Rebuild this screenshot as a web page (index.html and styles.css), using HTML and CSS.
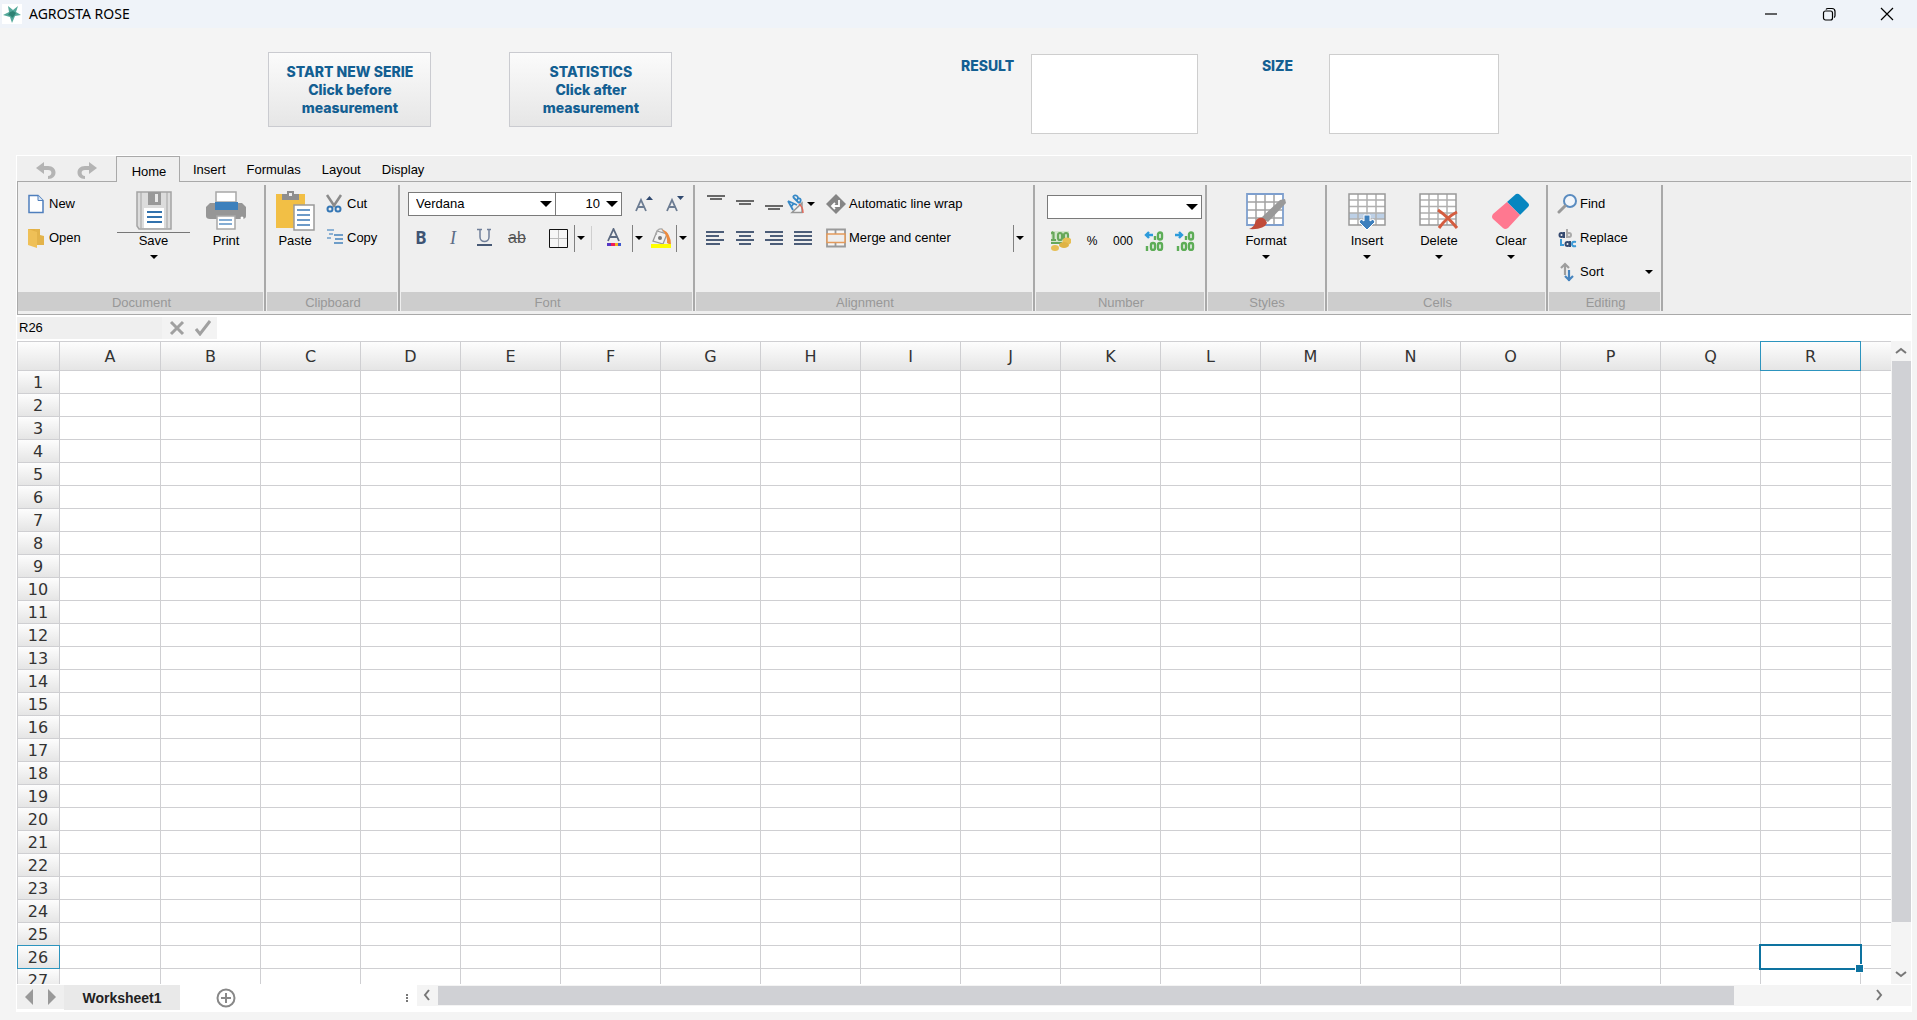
FILE: index.html
```html
<!DOCTYPE html>
<html lang="en">
<head>
<meta charset="utf-8">
<title>AGROSTA ROSE</title>
<link rel="stylesheet" href="styles.css">
</head>
<body>
<svg class="defs" width="0" height="0" aria-hidden="true">
  <symbol id="caret" viewBox="0 0 10 10"><path d="M1 3h8L5 7z"/></symbol>
  <symbol id="drop" viewBox="0 0 12 12"><path d="M0 3h12L6 9z"/></symbol>
</svg>

<header class="titlebar">
  <svg class="logo" viewBox="0 0 20 20"><path fill="#fff" d="M0 0h20v20H0z"/><path fill="#55a99b" d="M6 2l5 4 5-4-2 6 5 3-6 1-3 7-2-6-7-2 6-3z"/><path fill="#2d8273" d="M8 8l3-1 3 2-2 3-2 2-1-2-3-1z"/></svg>
  <h1>AGROSTA ROSE</h1>
  <div class="window-buttons">
    <button aria-label="Minimize"><svg viewBox="0 0 14 14"><path d="M1 7h12"/></svg></button>
    <button aria-label="Restore"><svg viewBox="0 0 14 14"><rect x="1.500" y="4" width="9" height="9" rx="2"/><path d="M4 2.500Q4.500 1.500 6 1.500h4q3 0 3 3v4q0 1.500-1 2"/></svg></button>
    <button aria-label="Close"><svg viewBox="0 0 14 14"><path d="M1 1l12 12M13 1L1 13"/></svg></button>
  </div>
</header>

<section class="measure">
  <button class="action">START NEW SERIE<br>Click before<br>measurement</button>
  <button class="action">STATISTICS<br>Click after<br>measurement</button>
  <div class="readout result"><label for="result">RESULT</label><input id="result" type="text"></div>
  <div class="readout size"><label for="size">SIZE</label><input id="size" type="text"></div>
</section>

<main class="workbook">
  <nav class="tabs">
    <div class="history">
      <button aria-label="Undo"><svg class="ic" viewBox="0 0 20 20"><path d="M8 2L0 8l8 6v-4h4c5 0 4 6 0 6v3c10 0 10-13 0-13H8z" fill="#b4b4b4"/></svg></button>
      <button aria-label="Redo"><svg class="ic" viewBox="0 0 20 20"><path d="M12 2l8 6-8 6v-4H8c-5 0-4 6 0 6v3C-2 19-2 6 8 6h4z" fill="#b4b4b4"/></svg></button>
    </div>
    <button class="tab active">Home</button>
    <button class="tab">Insert</button>
    <button class="tab">Formulas</button>
    <button class="tab">Layout</button>
    <button class="tab">Display</button>
  </nav>

  <div class="ribbon">
    <section class="group g-document">
      <div class="tools">
        <div class="stack">
          <div class="row"><button class="tool"><svg class="ic" viewBox="0 0 20 20"><path d="M3 1.500h9l5 5v12H3z" fill="#fff" stroke="#4f7fbd" stroke-width="1.500"/><path d="M12 1.500v5h5" fill="#dbe7f5" stroke="#4f7fbd"/></svg>New</button></div>
          <div class="row"><button class="tool"><svg class="ic" viewBox="0 0 20 20"><path d="M2 1h7v16H2z" fill="#e3b044"/><path d="M9 1h5v6l4 1v9H9z" fill="#e3b34a"/><path d="M2 1l9 3v16l-9-3z" fill="#efc057"/></svg>Open</button></div>
        </div>
        <button class="big save"><svg class="pic" viewBox="0 0 40 40"><path d="M3 2h34v37H5l-2-3z" fill="#dcdcdc" stroke="#a4a4a4" stroke-width="1.500"/><path d="M7 2v36M33 2v36" stroke="#a4a4a4"/><path d="M14 2h13v13H14z" fill="#999"/><path d="M21 4h3v8h-3z" fill="#e9e9e9"/><path d="M10 18h20v20H10z" fill="#fff"/><path d="M13 22h15M13 27h15M13 32h15" stroke="#3272ad" stroke-width="2"/></svg><span>Save</span><svg class="caret"><use href="#caret"/></svg></button>
        <button class="big"><svg class="pic" viewBox="0 0 40 40"><path d="M4 13h32l4 4v9q0 3-4 3H4q-4 0-4-3v-9z" fill="#969696"/><path d="M10 2h20v10H10z" fill="#fff" stroke="#a8a8a8" stroke-width="1.500"/><path d="M9 12h23v8H9z" fill="#3d80bc"/><path d="M11 26h18v13H11z" fill="#fff" stroke="#a8a8a8" stroke-width="1.500"/><path d="M13 30h13M13 34h13" stroke="#5c92c6" stroke-width="1.500"/><circle cx="36" cy="28" r="1.500" fill="#fff"/></svg><span>Print</span></button>
      </div>
      <h2>Document</h2>
    </section>

    <section class="group g-clipboard">
      <div class="tools">
        <button class="big"><svg class="pic" viewBox="0 0 40 40"><path d="M1 4h29v34H1z" fill="#f2bf45"/><path d="M7 4h5V1h7v3h5v6H7z" fill="#8e8e8e"/><path d="M14 3h3v3h-3z" fill="#eee"/><path d="M19 15h20v25H19z" fill="#fff" stroke="#9b9b9b" stroke-width="1.500"/><path d="M22 20h13M22 25h13M22 30h13M22 35h13" stroke="#3c7ab7" stroke-width="1.500"/></svg><span>Paste</span></button>
        <div class="stack">
          <div class="row"><button class="tool"><svg class="ic" viewBox="0 0 20 20"><path d="M3 1l8 12M17 1L9 13" stroke="#8b8b8b" stroke-width="2.500"/><circle cx="6" cy="15" r="2.500" fill="none" stroke="#3577b5" stroke-width="2"/><circle cx="14" cy="15" r="2.500" fill="none" stroke="#3577b5" stroke-width="2"/></svg>Cut</button></div>
          <div class="row"><button class="tool"><svg class="ic" viewBox="0 0 20 20"><path d="M3 2h7M5 6h4M3 10h4" stroke="#6d9ecb" stroke-width="1.500"/><path d="M10 7h9M11 11h8M10 15h9" stroke="#4482bc" stroke-width="1.500"/></svg>Copy</button></div>
        </div>
      </div>
      <h2>Clipboard</h2>
    </section>

    <section class="group g-font">
      <div class="tools">
        <div class="stack">
          <div class="row">
            <div class="combo face"><select aria-label="Font"><option>Verdana</option></select><svg><use href="#drop"/></svg></div>
            <div class="combo points"><select aria-label="Font size"><option>10</option></select><svg><use href="#drop"/></svg></div>
            <div class="set scale">
              <button aria-label="Grow font"><svg class="ic" viewBox="0 0 20 20"><path d="M1 17L6 6l5 11M3 13h6" fill="none" stroke="#6c7c92" stroke-width="1.800"/><path d="M11 6h7l-3.500-4z" fill="#314a70"/></svg></button>
              <button aria-label="Shrink font"><svg class="ic" viewBox="0 0 20 20"><path d="M2 17L7 6l5 11M4 13h6" fill="none" stroke="#6c7c92" stroke-width="1.800"/><path d="M12 2h7l-3.500 4z" fill="#314a70"/></svg></button>
            </div>
          </div>
          <div class="row">
            <div class="set faces">
              <button class="glyph b">B</button>
              <button class="glyph i">I</button>
              <button aria-label="Underline"><svg class="ic" viewBox="0 0 20 20"><path d="M5 1v8c0 6 9 6 9 0V1M2 1.500h5M12 1.500h4" fill="none" stroke="#71809a" stroke-width="1.500"/><path d="M2 17h15" stroke="#475975" stroke-width="2"/></svg></button>
              <button class="glyph s">ab</button>
            </div>
            <div class="split borders"><button aria-label="Borders"><svg class="ic" viewBox="0 0 20 20"><path fill="#f6f6f6" stroke="#111" d="M.5 1.500h18v18H.5z"/><path d="M9.500 2v17M1 10.500h17" stroke="#bbb"/></svg></button><button class="more" aria-label="More borders"><svg class="caret"><use href="#caret"/></svg></button></div>
            <i class="rule"></i>
            <div class="split color"><button aria-label="Font color"><svg class="ic" viewBox="0 0 20 20"><path d="M4 13L9.500 1 15 13M6 9h7" fill="none" stroke="#5b6980" stroke-width="1.800"/><path d="M3 15h4v3H3z" fill="#5636c4"/><path d="M7 15h4v3H7z" fill="#ed1e5a"/><path d="M11 15h3v3h-3z" fill="#f7b31b"/><path d="M14 15h3v3h-3z" fill="#4059cf"/></svg></button><button class="more" aria-label="More font colors"><svg class="caret"><use href="#caret"/></svg></button></div>
            <div class="split fill"><button aria-label="Fill color"><svg class="ic" viewBox="0 0 20 20"><path d="M6 3l10 3-4 10-10-3z" fill="#f2f2f2" stroke="#999" stroke-width="1.300"/><path d="M5 7q1-7 6-6l2 4" fill="none" stroke="#aaa" stroke-width="1.400"/><circle cx="9" cy="10" r="2" fill="#777"/><path d="M11 1q9 4 9 16l-4-2q1-6-5-14z" fill="#ed8a3d"/><path d="M0 16h20v4H0z" fill="#ff0"/></svg></button><button class="more" aria-label="More fill colors"><svg class="caret"><use href="#caret"/></svg></button></div>
          </div>
        </div>
      </div>
      <h2>Font</h2>
    </section>

    <section class="group g-alignment">
      <div class="tools">
        <div class="stack">
          <div class="row">
            <div class="set lines">
              <button aria-label="Align top"><svg class="ic" viewBox="0 0 20 20"><path d="M1 2h18M4 5h12" stroke="#686868" stroke-width="2"/></svg></button>
              <button aria-label="Align middle"><svg class="ic" viewBox="0 0 20 20"><path d="M1 7h18M4 10h12" stroke="#686868" stroke-width="2"/></svg></button>
              <button aria-label="Align bottom"><svg class="ic" viewBox="0 0 20 20"><path d="M1 12h18M4 15h12" stroke="#686868" stroke-width="2"/></svg></button>
            </div>
            <button class="rotate" aria-label="Text rotation"><svg class="ic" viewBox="0 0 20 20"><g fill="none" stroke="#3789c7" stroke-width="1.800"><path d="M2 7l9 4M2 7l5 9M8 9l-3 4"/><path d="M7 3l6 6M11 6c2-4 6 0 2 3M7 3c2-4 7 0 4 3"/></g><path d="M6 18.500L16 9v9.500z" fill="#f4f4f4" stroke="#969696" stroke-width="1.500"/><path d="M13 10q4 3 4 9" fill="none" stroke="#e0695a" stroke-width="1.500"/></svg><svg class="caret"><use href="#caret"/></svg></button>
            <button class="tool"><svg class="ic" viewBox="0 0 20 20"><path d="M10 0l10 10-10 10L0 10z" fill="#858585"/><path d="M13 6v6H7M9 9l-3 3 3 3" fill="none" stroke="#fff" stroke-width="1.800"/></svg>Automatic line wrap</button>
          </div>
          <div class="row">
            <div class="set lines">
              <button aria-label="Align left"><svg class="ic" viewBox="0 0 20 20"><path d="M0 4h18M0 8h13M0 12h18M0 16h14" stroke="#4c5d78" stroke-width="1.800"/></svg></button>
              <button aria-label="Center"><svg class="ic" viewBox="0 0 20 20"><path d="M1 4h18M4 8h12M1 12h18M4 16h12" stroke="#4c5d78" stroke-width="1.800"/></svg></button>
              <button aria-label="Align right"><svg class="ic" viewBox="0 0 20 20"><path d="M1 4h18M6 8h13M1 12h18M6 16h13" stroke="#4c5d78" stroke-width="1.800"/></svg></button>
              <button aria-label="Justify"><svg class="ic" viewBox="0 0 20 20"><path d="M1 4h18M1 8h18M1 12h18M1 16h18" stroke="#4c5d78" stroke-width="1.800"/></svg></button>
            </div>
            <button class="tool merge"><svg class="ic" viewBox="0 0 20 20"><path d="M1 1.500h18v17H1z" fill="#f6f6f6" stroke="#9a9a9a" stroke-width="1.800"/><path d="M9.500 1v5M9.500 15v4" stroke="#9a9a9a" stroke-width="1.800"/><path d="M1 6h18v8.500H1z" fill="#eee" stroke="#e39a5b" stroke-width="1.500"/></svg>Merge and center</button>
            <button class="more" aria-label="More merge options"><svg class="caret"><use href="#caret"/></svg></button>
          </div>
        </div>
      </div>
      <h2>Alignment</h2>
    </section>

    <section class="group g-number">
      <div class="tools">
        <div class="stack">
          <div class="row"><div class="combo format"><select aria-label="Number format"><option></option></select><svg><use href="#drop"/></svg></div></div>
          <div class="row formats">
            <button aria-label="Currency"><svg class="ic" viewBox="0 0 20 20"><path d="M0 0h18v13H0z" fill="#d3e6cd"/><path d="M2.500 1v8M0 2.500l2.500-1.500M0 9h5" stroke="#67a85a" stroke-width="2.200" fill="none"/><rect x="7" y="2" width="4" height="7" rx="2" fill="none" stroke="#67a85a" stroke-width="2.200"/><rect x="13" y="2" width="4" height="7" rx="2" fill="none" stroke="#67a85a" stroke-width="2.200"/><path d="M0 12h11" stroke="#67a85a" stroke-width="2"/><ellipse cx="16" cy="10" rx="4.500" ry="3.500" fill="#e7bf54"/><ellipse cx="13" cy="14" rx="5" ry="3" fill="#dfb345"/><ellipse cx="4" cy="17" rx="4" ry="3" fill="#e7bf54"/></svg></button>
            <button class="glyph n">%</button>
            <button class="glyph n">000</button>
            <button aria-label="Increase decimals"><svg class="ic" viewBox="0 0 20 20"><path d="M9 4H2M5 1L2 4l3 3" stroke="#2d9bdb" stroke-width="2.400" fill="none"/><g fill="none" stroke="#5dad57" stroke-width="2.400"><rect x="14" y="1.500" width="4" height="7" rx="2"/><rect x="7" y="12" width="4" height="7" rx="2"/><rect x="14" y="12" width="4" height="7" rx="2"/><path d="M11 5v4M3 15v5"/></g></svg></button>
            <button aria-label="Decrease decimals"><svg class="ic" viewBox="0 0 20 20"><path d="M0 4h7M4 1l3 3-3 3" stroke="#2d9bdb" stroke-width="2.400" fill="none"/><g fill="none" stroke="#5dad57" stroke-width="2.400"><rect x="14" y="1.500" width="4" height="7" rx="2"/><rect x="7" y="12" width="4" height="7" rx="2"/><rect x="14" y="12" width="4" height="7" rx="2"/><path d="M11 5v4M3 15v5"/></g></svg></button>
          </div>
        </div>
      </div>
      <h2>Number</h2>
    </section>

    <section class="group g-styles">
      <div class="tools">
        <button class="big"><svg class="pic" viewBox="0 0 40 40"><path d="M1 4h36v31H1z" fill="#fff"/><path d="M10 4v31M19 4v31M28 4v31M1 12h36M1 20h36M1 28h36" stroke="#a3a3a3" stroke-width="1.500"/><path d="M1 4h36v31H1z" fill="none" stroke="#7e9fce" stroke-width="1.800"/><path d="M39 9l1 4-18 19-7-4 19-18z" fill="#999"/><path d="M13 28q6-1 8 5-3 7-18 6 5-2 6-6 1-4 4-5z" fill="#c04b3a"/></svg><span>Format</span><svg class="caret"><use href="#caret"/></svg></button>
      </div>
      <h2>Styles</h2>
    </section>

    <section class="group g-cells">
      <div class="tools">
        <button class="big"><svg class="pic" viewBox="0 0 40 40"><path d="M2 4h36v31H2z" fill="#fff"/><path d="M2 23h36v6H2z" fill="#bdd0e6"/><path d="M2 10h36M2 16.500h36M2 23h36M2 29h36M11 4v31M20 4v31M29 4v31" stroke="#b0b0b0" stroke-width="1.500"/><path d="M2 4h36v31H2z" fill="none" stroke="#999" stroke-width="1.500"/><path d="M17 25h6v6l3-2 2 3-8 8-8-8 2-3 3 2z" fill="#3c7fbd" stroke="#fff"/></svg><span>Insert</span><svg class="caret"><use href="#caret"/></svg></button>
        <button class="big"><svg class="pic" viewBox="0 0 40 40"><path d="M1 4h36v31H1z" fill="#fff"/><path d="M1 10h36M1 16.500h36M1 23h36M1 29h36M10 4v31M19 4v31M28 4v31" stroke="#b0b0b0" stroke-width="1.500"/><path d="M1 4h36v31H1z" fill="none" stroke="#999" stroke-width="1.500"/><path d="M19 20q9 6 19 18M38 22q-10 5-18 16" fill="none" stroke="#d45c3f" stroke-width="3"/></svg><span>Delete</span><svg class="caret"><use href="#caret"/></svg></button>
        <button class="big"><svg class="pic" viewBox="0 0 40 40"><path d="M16 12L25 4q2-1 4 1l8 8q2 2 0 4l-8 8z" fill="#0786c0"/><path d="M16 12l13 13-12 13q-3 2-5 0L2 29q-2-2 0-5z" fill="#ff7890"/></svg><span>Clear</span><svg class="caret"><use href="#caret"/></svg></button>
      </div>
      <h2>Cells</h2>
    </section>

    <section class="group g-editing">
      <div class="tools">
        <div class="stack">
          <div class="row"><button class="tool"><svg class="ic" viewBox="0 0 20 20"><circle cx="13" cy="7" r="6" fill="#f2f6fb" stroke="#5a8cc0" stroke-width="2"/><path d="M8 12l-6 6" stroke="#999" stroke-width="3" stroke-linecap="round"/></svg>Find</button></div>
          <div class="row"><button class="tool"><svg class="ic" viewBox="0 0 20 20"><g fill="none" stroke-width="2"><circle cx="4.500" cy="7" r="2" stroke="#34496f"/><path d="M7 4v6" stroke="#34496f"/><path d="M10 1v9" stroke="#aaa"/><circle cx="12" cy="7" r="2" stroke="#aaa"/><path d="M4 11v6h3" stroke="#3d9ad6"/><circle cx="10.500" cy="16" r="2" stroke="#34496f"/><path d="M13 13v6" stroke="#34496f"/><path d="M19 14q-4-1-4 2t4 2" stroke="#3d9ad6"/></g></svg>Replace</button></div>
          <div class="row"><button class="tool"><svg class="ic" viewBox="0 0 20 20"><path d="M8 13V2M4 6l4-4 4 4" fill="none" stroke="#9d9d9d" stroke-width="2.200"/><path d="M12 8v11M8 14l4 4 4-4" fill="none" stroke="#4684bf" stroke-width="2.200"/></svg>Sort</button><button class="sort-more" aria-label="More sort options"><svg class="caret"><use href="#caret"/></svg></button></div>
        </div>
      </div>
      <h2>Editing</h2>
    </section>
  </div>

  <div class="formula">
    <input class="cell-name" type="text" value="R26" aria-label="Cell name">
    <div class="confirm">
      <button aria-label="Cancel"><svg viewBox="0 0 16 16"><path d="M2 2l12 12M14 2L2 14"/></svg></button>
      <button aria-label="Accept"><svg viewBox="0 0 16 16"><path d="M1 9l4 5L15 1"/></svg></button>
    </div>
    <input class="formula-text" type="text" aria-label="Formula">
  </div>

  <div class="sheet">
    <div class="viewport">
      <table id="grid"><thead></thead><tbody></tbody></table>
    </div>
    <div class="vscroll">
      <button aria-label="Scroll up"><svg viewBox="0 0 12 12"><path d="M1 8l5-4 5 4"/></svg></button>
      <div class="track"><div class="thumb"></div></div>
      <button aria-label="Scroll down"><svg viewBox="0 0 12 12"><path d="M1 4l5 4 5-4"/></svg></button>
    </div>
  </div>

  <footer class="sheetbar">
    <div class="sheet-nav">
      <button aria-label="Previous sheet"><svg viewBox="0 0 10 16"><path d="M9 0v16L1 8z"/></svg></button>
      <button aria-label="Next sheet"><svg viewBox="0 0 10 16"><path d="M1 0v16l8-8z"/></svg></button>
    </div>
    <button class="sheet-tab">Worksheet1</button>
    <button class="add" aria-label="Add sheet"><svg class="ic" viewBox="0 0 20 20"><circle cx="10" cy="10" r="8.500"/><path d="M10 5v10M5 10h10"/></svg></button>
    <svg class="grip" viewBox="0 0 2 8"><path d="M0 0h2v2H0zM0 3h2v2H0zM0 6h2v2H0z"/></svg>
    <div class="hscroll">
      <button aria-label="Scroll left"><svg viewBox="0 0 12 12"><path d="M8 1L4 6l4 5"/></svg></button>
      <div class="track"><div class="thumb"></div></div>
      <button aria-label="Scroll right"><svg viewBox="0 0 12 12"><path d="M4 1l4 5-4 5"/></svg></button>
    </div>
  </footer>
</main>
<script src="grid.js"></script>
</body>
</html>
```
FILE: styles.css
```css
* { box-sizing: border-box; }

body {
  margin: 0;
  height: 100vh;
  display: flex;
  flex-direction: column;
  overflow: hidden;
  background: #f4f4f4;
  color: #000;
  font: 13px/16px "Liberation Sans", Arial, sans-serif;
}

button {
  margin: 0;
  padding: 0;
  border: 0;
  background: none;
  color: inherit;
  font: inherit;
}

input, select { font: inherit; color: inherit; border-radius: 0; }
svg { display: block; flex: none; }
.defs { position: absolute; }
.ic { width: 20px; height: 20px; }
.pic { width: 40px; height: 40px; overflow: visible; }
.caret { width: 10px; height: 10px; }

/* Title bar */
.titlebar {
  flex: none;
  display: flex;
  align-items: center;
  height: 28px;
  padding: 0 1px 0 2px;
  background: #eff3f9;
}
.logo { width: 20px; height: 20px; }
.titlebar h1 {
  margin: 0 auto 0 7px;
  font: 400 14px/20px "Noto Sans", "Open Sans", sans-serif;
}
.window-buttons { display: flex; }
.window-buttons button { width: 58px; height: 28px; display: grid; place-items: center; }
.window-buttons svg { width: 14px; height: 14px; fill: none; stroke: #000; stroke-width: 1.2; }

/* Measurement controls */
.measure {
  flex: none;
  display: flex;
  align-items: flex-start;
  height: 127px;
  padding: 24px 0 0 14%;
  color: #135f92;
  font: 800 14px/18px Inter, Arial, sans-serif;
}
.action {
  width: 163px;
  height: 75px;
  border: 1px solid #cacbd0;
  background: linear-gradient(#fbfbfb, #e6e6e6);
}
.action + .action { margin-left: 78px; }
.readout { display: flex; padding-top: 2px; }
.readout label { padding-top: 3px; width: 70px; }
.readout input { width: 167px; height: 80px; border: 1px solid #cecece; background: #fff; }
.result { margin-left: 17.5%; }
.size { margin-left: 64px; }
.size label { width: 67px; }
.size input { width: 170px; }

/* Workbook */
.workbook {
  flex: 1;
  min-height: 0;
  display: flex;
  flex-direction: column;
  margin: 0 5px 8px 16px;
  border: 1px solid #fff;
  background: #fff;
}

.tabs {
  flex: none;
  display: flex;
  height: 26px;
  background: #efefef;
  border-bottom: 1px solid #a9a9a9;
}
.history { width: 99px; display: flex; align-items: center; gap: 21px; padding: 2px 0 0 19px; }
.tab { padding: 2px 11px 0 10px; }
.tab.active {
  width: 64px;
  height: 26px;
  margin-right: 3px;
  padding: 4px 0 0 2px;
  border: 1px solid #a9a9a9;
  border-bottom: 0;
  background: #efefef;
}

.ribbon {
  flex: none;
  display: flex;
  padding: 3px 0;
  background: #efefef;
  border-left: 1px solid #a9a9a9;
  border-bottom: 1px solid #a9a9a9;
}
.group {
  flex: none;
  display: flex;
  flex-direction: column;
  margin-right: 1px;
  padding-right: 1px;
  border-right: 2px solid #a9a9a9;
}
.group h2 {
  margin: 0;
  height: 19px;
  padding: 1px 0 0 2px;
  font: 400 13px/20px "Liberation Sans", Arial, sans-serif;
  text-align: center;
  color: #989898;
  background: #cdcdcd;
}
.tools { display: flex; height: 107px; padding-top: 2px; }
.g-document { width: 248px; }
.g-document .tools { padding-left: 8px; }
.g-document .stack { width: 91px; }
.g-document .save { width: 73px; margin-right: 6px; }
.g-clipboard { width: 133px; }
.g-clipboard .tools { padding-left: 3px; gap: 4px; }
.g-clipboard .big { width: 50px; }
.g-font { width: 294px; }
.g-font .tools { padding-left: 7px; }
.g-alignment { width: 339px; }
.g-alignment .tools { padding: 2px 7px 0 10px; }
.g-number { width: 171px; }
.g-number .tools { padding: 5px 0 0 11px; }
.g-styles { width: 119px; }
.g-styles .tools { justify-content: center; }
.g-cells { width: 220px; }
.g-cells .tools { padding-left: 9px; gap: 12px; }
.g-editing { width: 114px; }
.g-editing .tools { padding: 2px 6px 0 8px; }
.g-alignment .stack, .g-editing .stack { flex: 1; }

.row { display: flex; align-items: center; height: 34px; }
.tool { display: flex; align-items: center; gap: 3px; white-space: nowrap; }
.set { display: flex; }
.big {
  width: 60px;
  display: flex;
  flex-direction: column;
  align-items: center;
  padding-top: 3px;
  align-self: flex-start;
}
.big span { width: 100%; margin-top: 2px; border-top: 1px solid transparent; }
.big .caret { margin-top: 3px; }
.save span { border-color: #777; }

.combo { display: grid; align-items: center; }
.combo select {
  grid-area: 1 / 1;
  width: 100%;
  height: 24px;
  padding: 0 24px 0 7px;
  border: 1px solid #7a7a7a;
  background: #fff;
  appearance: none;
}
.combo svg { grid-area: 1 / 1; justify-self: end; width: 12px; height: 12px; margin-right: 4px; pointer-events: none; }
.face { width: 148px; }
.points { width: 67px; margin-left: -1px; }
.points select { padding: 0 21px 0 0; text-align: right; text-align-last: right; }
.format { width: 155px; }

.scale { gap: 10px; margin-left: 13px; }
.faces { gap: 12px; padding-left: 3px; }
.lines { gap: 9px; }
.glyph { width: 20px; height: 20px; text-align: center; }
.glyph.b { color: #3f5474; font: 700 17px/20px "Noto Sans", sans-serif; }
.glyph.i { color: #5c6c86; font: italic 18px/20px "Liberation Serif", serif; }
.glyph.s { color: #555; font-size: 16px; line-height: 20px; text-decoration: line-through; }
.glyph.n { font-size: 12px; line-height: 20px; }
.split { display: flex; align-items: center; }
.more { height: 27px; padding-left: 1px; border-left: 1px solid #808080; }
.split .more { margin-left: 5px; }
.borders { margin-left: 22px; }
.rule { width: 1px; height: 24px; margin: 0 12px 0 5px; background: #cfcfcf; }
.color .more { margin-left: 8px; }
.fill { margin-left: 7px; }
.rotate { display: flex; align-items: center; margin: 0 10px 0 2px; }
.merge { margin-left: 13px; }
.merge + .more { margin-left: auto; }
.formats { gap: 11px; padding-left: 4px; }
.sort-more { margin-left: auto; }

/* Formula bar */
.formula { flex: none; display: flex; height: 26px; padding: 2px 2px 2px 0; }
.cell-name { width: 145px; padding: 0 2px; border: 0; background: #efefef; }
.confirm { width: 55px; display: flex; align-items: center; gap: 10px; padding-left: 7px; background: #f3f3f3; }
.confirm svg { width: 16px; height: 16px; fill: none; stroke: #a0a0a0; stroke-width: 3; }
.formula-text { flex: 1; min-width: 0; border: 0; background: #fff; }

/* Grid */
.sheet { flex: 1; min-height: 0; display: flex; }
.viewport { flex: 1; min-width: 0; overflow: hidden; }
table {
  width: 1944px;
  table-layout: fixed;
  border-collapse: separate;
  border-spacing: 0;
  font: 16px/20px "DejaVu Sans", Verdana, sans-serif;
  color: #333;
}
th, td {
  width: 100px;
  height: 23px;
  padding: 0;
  border: 0 solid #cfcfd2;
  border-width: 0 1px 1px 0;
}
th { padding-top: 1px; font-weight: 400; background: linear-gradient(#fdfdfd, #e5e5e5); }
thead th { height: 30px; border-top-width: 1px; }
tr > th:first-child { width: 43px; padding-right: 1px; border-left-width: 1px; }
tr > :nth-child(2) { width: 101px; }
th.current { border-color: #2d94be; }
thead th.current { box-shadow: -1px 0 #2d94be; }
tbody th.current { box-shadow: 0 -1px #2d94be; }
td.selected { position: relative; }
td.selected::before {
  content: "";
  position: absolute;
  inset: -2px;
  border: 2px solid #0e73a0;
}
td.selected::after {
  content: "";
  position: absolute;
  right: -4px;
  bottom: -5px;
  width: 7px;
  height: 7px;
  border: 1px solid #fff;
  background: #0e73a0;
}

/* Scroll bars */
.vscroll { flex: none; width: 20px; display: flex; flex-direction: column; padding-left: 1px; background: #f4f4f4; }
.vscroll button, .hscroll button { flex: none; width: 20px; height: 20px; display: grid; place-items: center; }
.vscroll svg, .hscroll svg { width: 12px; height: 12px; fill: none; stroke: #777; stroke-width: 2; }
.vscroll button { width: 18px; }
.track { flex: 1; }
.thumb { background: #d0d1d5; }
.vscroll .thumb { height: 93%; }

/* Sheet bar */
.sheetbar { flex: none; display: flex; align-items: flex-start; height: 27px; padding-top: 1px; }
.sheet-nav { width: 47px; height: 24px; display: flex; align-items: center; gap: 13px; padding-left: 7px; background: #efefef; }
.sheet-nav svg { width: 10px; height: 16px; fill: #999; }
.sheet-tab { width: 116px; height: 25px; background: #e9e9e9; color: #222; font-weight: 700; font-size: 14px; }
.add { margin: 3px 0 0 36px; }
.add svg { fill: none; stroke: #888; stroke-width: 2; }
.grip { width: 2px; height: 8px; margin: 9px 9px 0 170px; fill: #777; }
.hscroll { flex: 1; display: flex; height: 21px; padding-right: 22px; background: #f4f4f4; }
.hscroll .track { padding: 1px; }
.hscroll .thumb { width: 90.6%; height: 19px; }
```
FILE: grid.js
```js
const columns = [..."ABCDEFGHIJKLMNOPQR", ""];
const rowCount = 27;
const selected = { column: "R", row: 26 };
const grid = document.getElementById("grid");

function addCell(row, tag, text, className) {
  const cell = document.createElement(tag);
  cell.textContent = text;
  if (className) cell.className = className;
  row.append(cell);
}

const head = grid.tHead.insertRow();
addCell(head, "th", "");
for (const name of columns) {
  addCell(head, "th", name, name === selected.column ? "current" : "");
}

for (let n = 1; n <= rowCount; n++) {
  const row = grid.tBodies[0].insertRow();
  addCell(row, "th", n, n === selected.row ? "current" : "");
  for (const name of columns) {
    const here = n === selected.row && name === selected.column;
    addCell(row, "td", "", here ? "selected" : "");
  }
}
```
